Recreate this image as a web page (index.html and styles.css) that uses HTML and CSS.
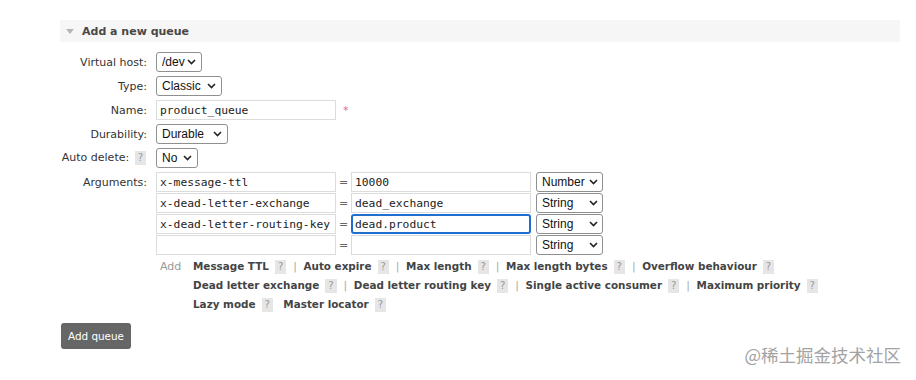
FILE: index.html
```html
<!DOCTYPE html>
<html lang="en">

<head>
    <meta charset="UTF-8" />
    <meta name="viewport" content="width=device-width, initial-scale=1.0" />
    <title>Add a new queue</title>
    <link rel="stylesheet" href="styles.css">
</head>

<body>
    <div class="section">
        <div class="section-head">
            <span class="arrow"></span>
            <h2>Add a new queue</h2>
        </div>

        <div class="form">
            <div class="row">
                <label class="lbl">Virtual host:</label>
                <select class="sel w-vhost"><option>/dev</option></select>
            </div>
            <div class="row">
                <label class="lbl">Type:</label>
                <select class="sel w-type"><option>Classic</option></select>
            </div>
            <div class="row">
                <label class="lbl">Name:</label>
                <input type="text" class="txt" value="product_queue">
                <span class="mand">*</span>
            </div>
            <div class="row">
                <label class="lbl">Durability:</label>
                <select class="sel w-dur"><option>Durable</option></select>
            </div>
            <div class="row">
                <label class="lbl">Auto delete: <span class="help">?</span></label>
                <select class="sel w-no"><option>No</option></select>
            </div>

            <!-- arguments -->
            <div class="row args-row">
                <label class="lbl">Arguments:</label>
                <div class="args">
                    <div class="arg">
                        <input type="text" class="txt" value="x-message-ttl">
                        <span class="eq">=</span>
                        <input type="text" class="txt" value="10000">
                        <select class="sel w-argtype"><option>Number</option></select>
                    </div>
                    <div class="arg">
                        <input type="text" class="txt" value="x-dead-letter-exchange">
                        <span class="eq">=</span>
                        <input type="text" class="txt" value="dead_exchange">
                        <select class="sel w-argtype"><option>String</option></select>
                    </div>
                    <div class="arg">
                        <input type="text" class="txt" value="x-dead-letter-routing-key">
                        <span class="eq">=</span>
                        <input type="text" class="txt focus" value="dead.product">
                        <select class="sel w-argtype"><option>String</option></select>
                    </div>
                    <div class="arg">
                        <input type="text" class="txt" value="">
                        <span class="eq">=</span>
                        <input type="text" class="txt" value="">
                        <select class="sel w-argtype"><option>String</option></select>
                    </div>

                    <div class="add-args">
                        <span class="add-lbl">Add</span>
                        <div class="links">
                            <div class="line">
                                <b>Message TTL</b><span class="help">?</span><i>|</i>
                                <b>Auto expire</b><span class="help">?</span><i>|</i>
                                <b>Max length</b><span class="help">?</span><i>|</i>
                                <b>Max length bytes</b><span class="help">?</span><i>|</i>
                                <b>Overflow behaviour</b><span class="help">?</span>
                            </div>
                            <div class="line">
                                <b>Dead letter exchange</b><span class="help">?</span><i>|</i>
                                <b>Dead letter routing key</b><span class="help">?</span><i>|</i>
                                <b>Single active consumer</b><span class="help">?</span><i>|</i>
                                <b>Maximum priority</b><span class="help">?</span>
                            </div>
                            <div class="line">
                                <b>Lazy mode</b><span class="help">?</span>
                                <b>Master locator</b><span class="help">?</span>
                            </div>
                        </div>
                    </div>
                </div>
            </div>
        </div>

        <button class="btn">Add queue</button>
    </div>

    <div class="watermark">@稀土掘金技术社区</div>
</body>

</html>
```

FILE: styles.css
```css
body {
    font-family: "DejaVu Sans", Verdana, sans-serif;
    font-size: 11px;
    color: #444;
    background: #fff;
    margin: 0;
    padding: 0;
}

.section {
    margin: 20px 16px 0 60px;
}

.section-head {
    display: flex;
    align-items: center;
    height: 22px;
    background: #f6f6f6;
    padding-left: 6px;
}

.arrow {
    width: 0;
    height: 0;
    border-left: 4.5px solid transparent;
    border-right: 4.5px solid transparent;
    border-top: 5px solid #b5b5b5;
    margin-right: 8px;
}

h2 {
    margin: 0;
    font-size: 11px;
    font-weight: bold;
    color: #484848;
}

.form {
    margin-top: 9px;
    display: flex;
    flex-direction: column;
    gap: 4px;
}

.row {
    display: flex;
    align-items: center;
    height: 20px;
}

.row:first-child {
    margin-top: 1px;
}

.args-row {
    align-items: flex-start;
    height: auto;
}

.lbl {
    width: 87px;
    padding-right: 9px;
    text-align: right;
    color: #333;
    white-space: nowrap;
}

.args-row .lbl {
    line-height: 22px;
}

.help {
    display: inline-block;
    background: #e6e6e6;
    color: #999;
    font-weight: normal;
    font-size: 10px;
    line-height: 14px;
    padding: 0 3px;
    margin: 0 7px 0 6px;
}

.lbl .help {
    margin: 0 1px 0 2px;
}

.sel {
    appearance: none;
    -webkit-appearance: none;
    height: 20px;
    border: 1px solid #8f8f8f;
    border-radius: 3px;
    background: #fff url("data:image/svg+xml;utf8,<svg xmlns='http://www.w3.org/2000/svg' width='9' height='6'><path d='M1 1 L4.5 4.5 L8 1' fill='none' stroke='%23222' stroke-width='1.6'/></svg>") no-repeat right 5px center;
    font-family: "Liberation Sans", Arial, sans-serif;
    font-size: 12px;
    color: #111;
    padding: 0 16px 0 5px;
    margin: 0;
}

.w-vhost { width: 46px; }
.w-type { width: 66px; }
.w-dur { width: 72px; }
.w-no { width: 42px; }
.w-argtype { width: 67px; margin-left: 5px; padding-right: 14px; background-position: right 4px center; }

.txt {
    box-sizing: border-box;
    width: 180px;
    height: 20px;
    border: 1px solid #dcdcdc;
    padding: 0 3px;
    margin: 0;
    font-family: "DejaVu Sans Mono", Menlo, monospace;
    font-size: 11.3px;
    color: #222;
    outline: none;
}

.txt.focus {
    border: 2px solid #1f6fd0;
    border-radius: 3px;
    padding: 0 2px;
}

.mand {
    color: #e86a8c;
    margin-left: 7px;
    font-size: 11px;
}

.args {
    display: flex;
    flex-direction: column;
    gap: 1px;
}

.arg {
    display: flex;
    align-items: center;
    height: 20px;
}

.eq {
    width: 15px;
    text-align: center;
    color: #666;
}

.add-args {
    display: flex;
    margin-top: 1px;
}

.add-lbl {
    color: #999;
    width: 33px;
    padding-left: 4px;
    line-height: 19px;
}

.links .line {
    line-height: 19px;
    white-space: nowrap;
}

.links b {
    color: #444;
    font-size: 10.4px;
}

.links i {
    font-style: normal;
    color: #aaa;
    margin-right: 3px;
}

.btn {
    margin-top: 9px;
    background: #666;
    color: #fff;
    border: none;
    border-radius: 3px;
    font-family: "DejaVu Sans", Verdana, sans-serif;
    font-size: 10.4px;
    padding: 0 7px;
    height: 26px;
    margin-left: 1px;
}

.watermark {
    position: absolute;
    right: 15px;
    bottom: 13px;
    font-family: "Noto Sans CJK SC", sans-serif;
    font-size: 17.5px;
    color: #a3a3a3;
}
```
